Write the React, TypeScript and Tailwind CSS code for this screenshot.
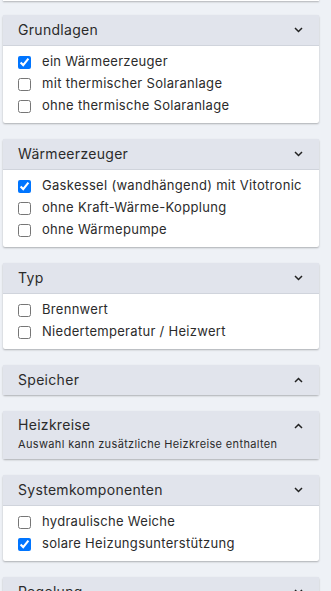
import React from "react";

type Item = { label: string; checked?: boolean };
type Section = { title: string; sub?: string; open: boolean; items?: Item[] };

const sections: Section[] = [
  {
    title: "Grundlagen",
    open: true,
    items: [
      { label: "ein Wärmeerzeuger", checked: true },
      { label: "mit thermischer Solaranlage" },
      { label: "ohne thermische Solaranlage" },
    ],
  },
  {
    title: "Wärmeerzeuger",
    open: true,
    items: [
      { label: "Gaskessel (wandhängend) mit Vitotronic", checked: true },
      { label: "ohne Kraft-Wärme-Kopplung" },
      { label: "ohne Wärmepumpe" },
    ],
  },
  {
    title: "Typ",
    open: true,
    items: [{ label: "Brennwert" }, { label: "Niedertemperatur / Heizwert" }],
  },
  { title: "Speicher", open: false },
  { title: "Heizkreise", sub: "Auswahl kann zusätzliche Heizkreise enthalten", open: false },
  {
    title: "Systemkomponenten",
    open: true,
    items: [
      { label: "hydraulische Weiche" },
      { label: "solare Heizungsunterstützung", checked: true },
    ],
  },
  {
    title: "Regelung",
    open: true,
    items: [{ label: "Vitotronic 200" }, { label: "Vitotronic 300" }],
  },
];

function Chevron({ up }: { up: boolean }) {
  return (
    <svg width="9" height="6" viewBox="0 0 9 6" className="shrink-0">
      <polyline
        points={up ? "1,5 4.5,1.5 8,5" : "1,1 4.5,4.5 8,1"}
        fill="none"
        stroke="#222"
        strokeWidth="1.5"
      />
    </svg>
  );
}

function Panel({ s }: { s: Section }) {
  return (
    <div className="mt-4 bg-white rounded-[2px] shadow-[0_1px_2px_rgba(0,0,0,0.28)]">
      <div
        className={
          "flex items-start justify-between bg-[#e1e4ec] pl-[15px] pr-[16px] " +
          (s.open ? "border-b border-[#d0d4dc]" : "")
        }
      >
        <div className={s.sub ? "pt-[4px] pb-[6px]" : "py-[5px]"}>
          <div className="text-[14px] leading-[20px] tracking-[0.3px] text-[#2b2b2b]">{s.title}</div>
          {s.sub && (
            <div className="text-[11px] leading-[18px] tracking-[0.35px] text-[#2b2b2b]">{s.sub}</div>
          )}
        </div>
        <div className="pt-[12px]">
          <Chevron up={!s.open} />
        </div>
      </div>
      {s.open && s.items && (
        <div className="pt-[5px] pb-[6px]">
          {s.items.map((it) => (
            <label
              key={it.label}
              className="flex h-[22px] items-center gap-[11px] px-[15px] text-[13px] tracking-[0.4px] text-[#2b2b2b]"
            >
              <input type="checkbox" defaultChecked={it.checked} className="m-0 h-[13px] w-[13px] shrink-0" />
              <span className="whitespace-nowrap tracking-[0.3px]">{it.label}</span>
            </label>
          ))}
        </div>
      )}
    </div>
  );
}

export default function App() {
  return (
    <div className="min-h-screen bg-[#eef1f6] pl-[3px] pr-[12px] font-['Inter',sans-serif]">
      <div className="-mt-[1px] h-[2px] bg-white shadow-[0_1px_2px_rgba(0,0,0,0.28)]" />
      <div className="-mt-[2px]">
        {sections.map((s) => (
          <Panel key={s.title} s={s} />
        ))}
      </div>
    </div>
  );
}
